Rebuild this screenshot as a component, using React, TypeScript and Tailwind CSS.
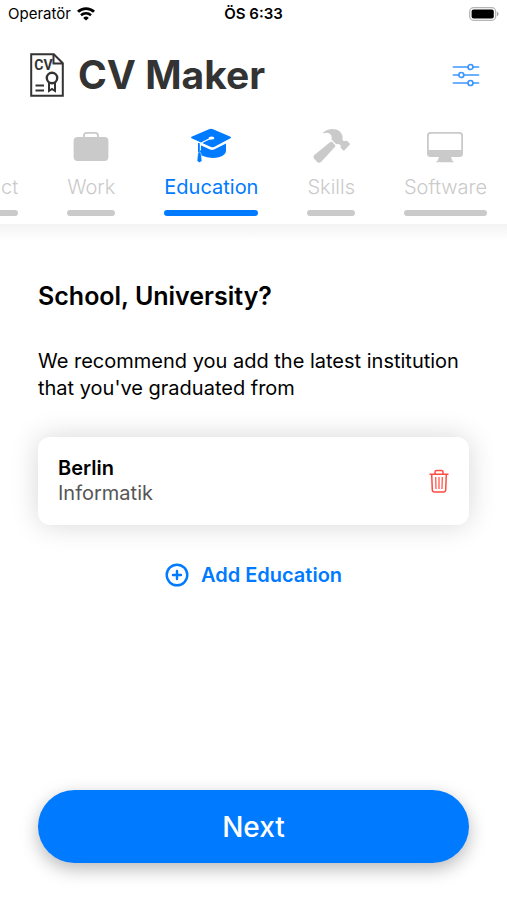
import type { ReactNode } from "react";

function WifiIcon() {
  return (
    <svg viewBox="0 0 18 14" className="h-[14px] w-[18px]" fill="none" stroke="currentColor" aria-hidden="true">
      <path d="M1 4.800a11.600 11.600 0 0 1 16 0" strokeWidth="2.900" />
      <path d="M4 8.200a7.300 7.300 0 0 1 10 0" strokeWidth="2.600" />
      <path d="M9 13.600 6.200 10.900a4 4 0 0 1 5.600 0Z" fill="currentColor" stroke="none" />
    </svg>
  );
}

function BatteryIcon() {
  return (
    <svg viewBox="0 0 30 14" className="h-[14px] w-[30px]" aria-hidden="true">
      <rect x="0.700" y="0.700" width="26" height="12.600" rx="4" fill="#fff" stroke="#b5b5b5" strokeWidth="1.300" />
      <rect x="2.600" y="2.400" width="22.200" height="9.200" rx="2" fill="#000" />
      <path d="M28 4.800c2 .6 2 3.800 0 4.400Z" fill="#a6a6a6" />
    </svg>
  );
}

function LogoIcon() {
  return (
    <svg viewBox="0 0 34 44" className="h-[44px] w-[34px]" fill="none" stroke="#333" strokeWidth="2" aria-hidden="true">
      <path d="M1.200 1.200h22.600l9 9v32.600H1.200Z" />
      <path d="M23.500 1.200v9.200h9.300" />
      <text x="4.300" y="16.800" fill="#333" stroke="none" fontFamily="Roboto, sans-serif" fontSize="14" fontWeight="700">CV</text>
      <circle cx="22" cy="25" r="5.200" strokeWidth="2.400" />
      <path d="M19 30v8l3-2 3 2v-8" />
      <path d="M5.500 32.500h8.500M5.500 37.500h8.500" />
    </svg>
  );
}

function OptionsIcon() {
  return (
    <svg viewBox="0 0 28 24" className="h-6 w-7" fill="none" stroke="currentColor" strokeWidth="1.700" strokeLinecap="round" aria-hidden="true">
      <path d="M1.500 4h14.500M21 4h5.500M1.500 12h5M12 12h14.500M1.500 20h14.500M21 20h5.500" />
      <circle cx="18.500" cy="4" r="2.500" />
      <circle cx="9.300" cy="12" r="2.500" />
      <circle cx="18.500" cy="20" r="2.500" />
    </svg>
  );
}

function PersonIcon() {
  return (
    <svg viewBox="0 0 24 40" className="h-10 w-6" fill="currentColor" aria-hidden="true">
      <circle cx="12" cy="14" r="6" />
      <path d="M1 35c0-16 22-16 22 0Z" />
    </svg>
  );
}

function BriefcaseIcon() {
  return (
    <svg viewBox="0 0 40 40" className="size-10" fill="currentColor" aria-hidden="true">
      <rect x="2.600" y="12" width="34.800" height="24" rx="4" />
      <path d="M13 13v-2.500q0-2.700 2.700-2.700h8.600q2.700 0 2.700 2.700V13" fill="none" stroke="currentColor" strokeWidth="1.800" />
    </svg>
  );
}

function GraduationIcon() {
  return (
    <svg viewBox="0 0 40 40" className="size-10" fill="currentColor" aria-hidden="true">
      <path d="M8.200 19.500 19 24.500q2 .9 4 0l12-6v7.500q-.5 4-6.500 6-9 2.500-18-1.500l-2.300-1.300Z" />
      <path d="M18 4.200q2-1 4 0l17 7.300q2 1 0 2.100L23.500 21.800q-2 1-4 0L1 13.600q-2-1.100 0-2.100Z" />
      <path d="m3.500 15.700 15.500 7.300q2.300 1 4.500 0l13.300-6.800" fill="none" stroke="#fff" strokeWidth="1.300" />
      <path d="M21 13.300q-3 .5-6 2.200-4.500 2-5.200 3.500-.6 1-.6 6.500" fill="none" stroke="#fff" strokeWidth="1.300" />
      <ellipse cx="20.500" cy="13" rx="2.900" ry="1.500" fill="#fff" />
      <path d="M7.800 18v10" fill="none" stroke="currentColor" strokeWidth="1.600" />
      <path d="M7 28q1.500-2 3 0l.9 7.500q-2.400 4-4.800 0Z" stroke="#fff" strokeWidth="0.500" />
    </svg>
  );
}

function HammerIcon() {
  return (
    <svg viewBox="0 0 40 40" className="size-10" fill="currentColor" aria-hidden="true">
      <path d="M12.300 7.300C16 3.500 24.500 2.500 28.500 6.300q4 3.700 3 8.500l1.300 1.500q1.500-.8 3.200-.5l2.700 2.700q.4.700 0 1.300l-5.300 5.400q-.8.500-1.500 0l-2.200-2.400q-.5-1.200.2-2.300l-2-1.600q-2 .6-3.200-.2L20.500 14.500q1-5.500-3.500-6.500-2-.4-4.200.4-.9-.3-.5-1.100Z" />
      <path d="M19.300 17q1-.7 1.800 0l3 3q.6.900 0 1.700L10.300 36.700q-2 2-4 .2l-3.200-3.200q-1.600-1.800.2-3.600Z" />
    </svg>
  );
}

function DesktopIcon() {
  return (
    <svg viewBox="0 0 40 40" className="size-10" fill="currentColor" aria-hidden="true">
      <path fillRule="evenodd" d="M5.500 7h29q3.500 0 3.500 3.500v18q0 3.500-3.500 3.500H26l1.500 4q1.500.3 1.500 1.200H11q0-.9 1.500-1.200L14 32H5.500Q2 32 2 28.500v-18Q2 7 5.500 7Zm.3 1.800q-2 0-2 2V25h32.400V10.800q0-2-2-2Z" />
    </svg>
  );
}

function TrashIcon() {
  return (
    <svg viewBox="0 0 20 24" className="h-6 w-5" fill="none" stroke="currentColor" strokeWidth="1.500" strokeLinejoin="round" aria-hidden="true">
      <path d="M.5 5.200h19M6 5V3q0-1.600 1.600-1.600h4.800Q14 1.400 14 3v2M2.700 5.500l.6 15.500q.2 2 2.200 2h9q2 0 2.200-2l.6-15.500" />
      <path d="m6.700 8 .3 12M10 8v12M13.300 8l-.3 12" strokeWidth="1.200" />
    </svg>
  );
}

function AddIcon() {
  return (
    <svg viewBox="0 0 24 24" className="size-6" fill="none" stroke="currentColor" strokeWidth="2.400" aria-hidden="true">
      <circle cx="12" cy="12" r="10.300" />
      <path d="M12 8v8M8 12h8" strokeLinecap="round" />
    </svg>
  );
}

const tabs: { label: string; icon: ReactNode }[] = [
  { label: "Contact", icon: <PersonIcon /> },
  { label: "Work", icon: <BriefcaseIcon /> },
  { label: "Education", icon: <GraduationIcon /> },
  { label: "Skills", icon: <HammerIcon /> },
  { label: "Software", icon: <DesktopIcon /> },
];

export default function App() {
  return (
    <div className="flex min-h-screen flex-col bg-white font-[Inter,sans-serif] text-black">
      <div className="grid h-7 grid-cols-3 items-center px-2 text-[15px]">
        <div className="flex items-center gap-1.5">
          <span>Operatör</span>
          <WifiIcon />
        </div>
        <span className="text-center font-semibold">ÖS 6:33</span>
        <div className="flex justify-end">
          <BatteryIcon />
        </div>
      </div>

      <header className="flex items-center justify-between pt-5 pr-[27px] pl-[30px]">
        <div className="flex items-center gap-3.5">
          <LogoIcon />
          <h1 className="text-[39px] leading-[54px] font-bold text-[#333]">CV Maker</h1>
        </div>
        <button type="button" aria-label="Options" className="text-[#3d96ff]">
          <OptionsIcon />
        </button>
      </header>

      <nav className="flex justify-end gap-[49px] overflow-hidden pt-[23px] pr-5 pb-2">
        {tabs.map(({ label, icon }) => {
          const active = label === "Education";
          return (
            <button
              key={label}
              type="button"
              aria-current={active ? "page" : undefined}
              className={`flex shrink-0 flex-col items-center ${active ? "text-[#007aff]" : "font-light text-[#cacaca]"}`}
            >
              {icon}
              <span className="mt-2 text-xl">{label}</span>
              <span className="mt-[9px] h-1.5 w-full rounded-full bg-current" />
            </button>
          );
        })}
      </nav>
      <div className="h-4 bg-linear-to-b from-[#f3f3f3] to-white" />

      <main className="flex flex-1 flex-col px-[38px] pt-10 pb-[37px]">
        <h2 className="text-[25px] leading-8 font-semibold">School, University?</h2>
        <p className="mt-9 text-xl leading-[27px]">
          We recommend you add the latest institution that you've graduated from
        </p>
        <section className="mt-[35px] flex items-center justify-between rounded-xl bg-white px-5 py-[19px] shadow-[0_0_28px_rgba(0,0,0,0.16)]">
          <div className="text-xl leading-[25px]">
            <h3 className="font-semibold">Berlin</h3>
            <p className="text-[#555]">Informatik</p>
          </div>
          <button type="button" aria-label="Delete Berlin" className="text-[#ff4b42]">
            <TrashIcon />
          </button>
        </section>
        <button type="button" className="mt-9 flex items-center gap-3 self-center text-xl font-semibold text-[#007aff]">
          <AddIcon />
          Add Education
        </button>
        <button
          type="button"
          className="mt-auto h-[73px] rounded-full bg-[#007aff] text-[28px] font-medium text-white shadow-[0_6px_18px_rgba(0,0,0,0.28)]"
        >
          Next
        </button>
      </main>
    </div>
  );
}
